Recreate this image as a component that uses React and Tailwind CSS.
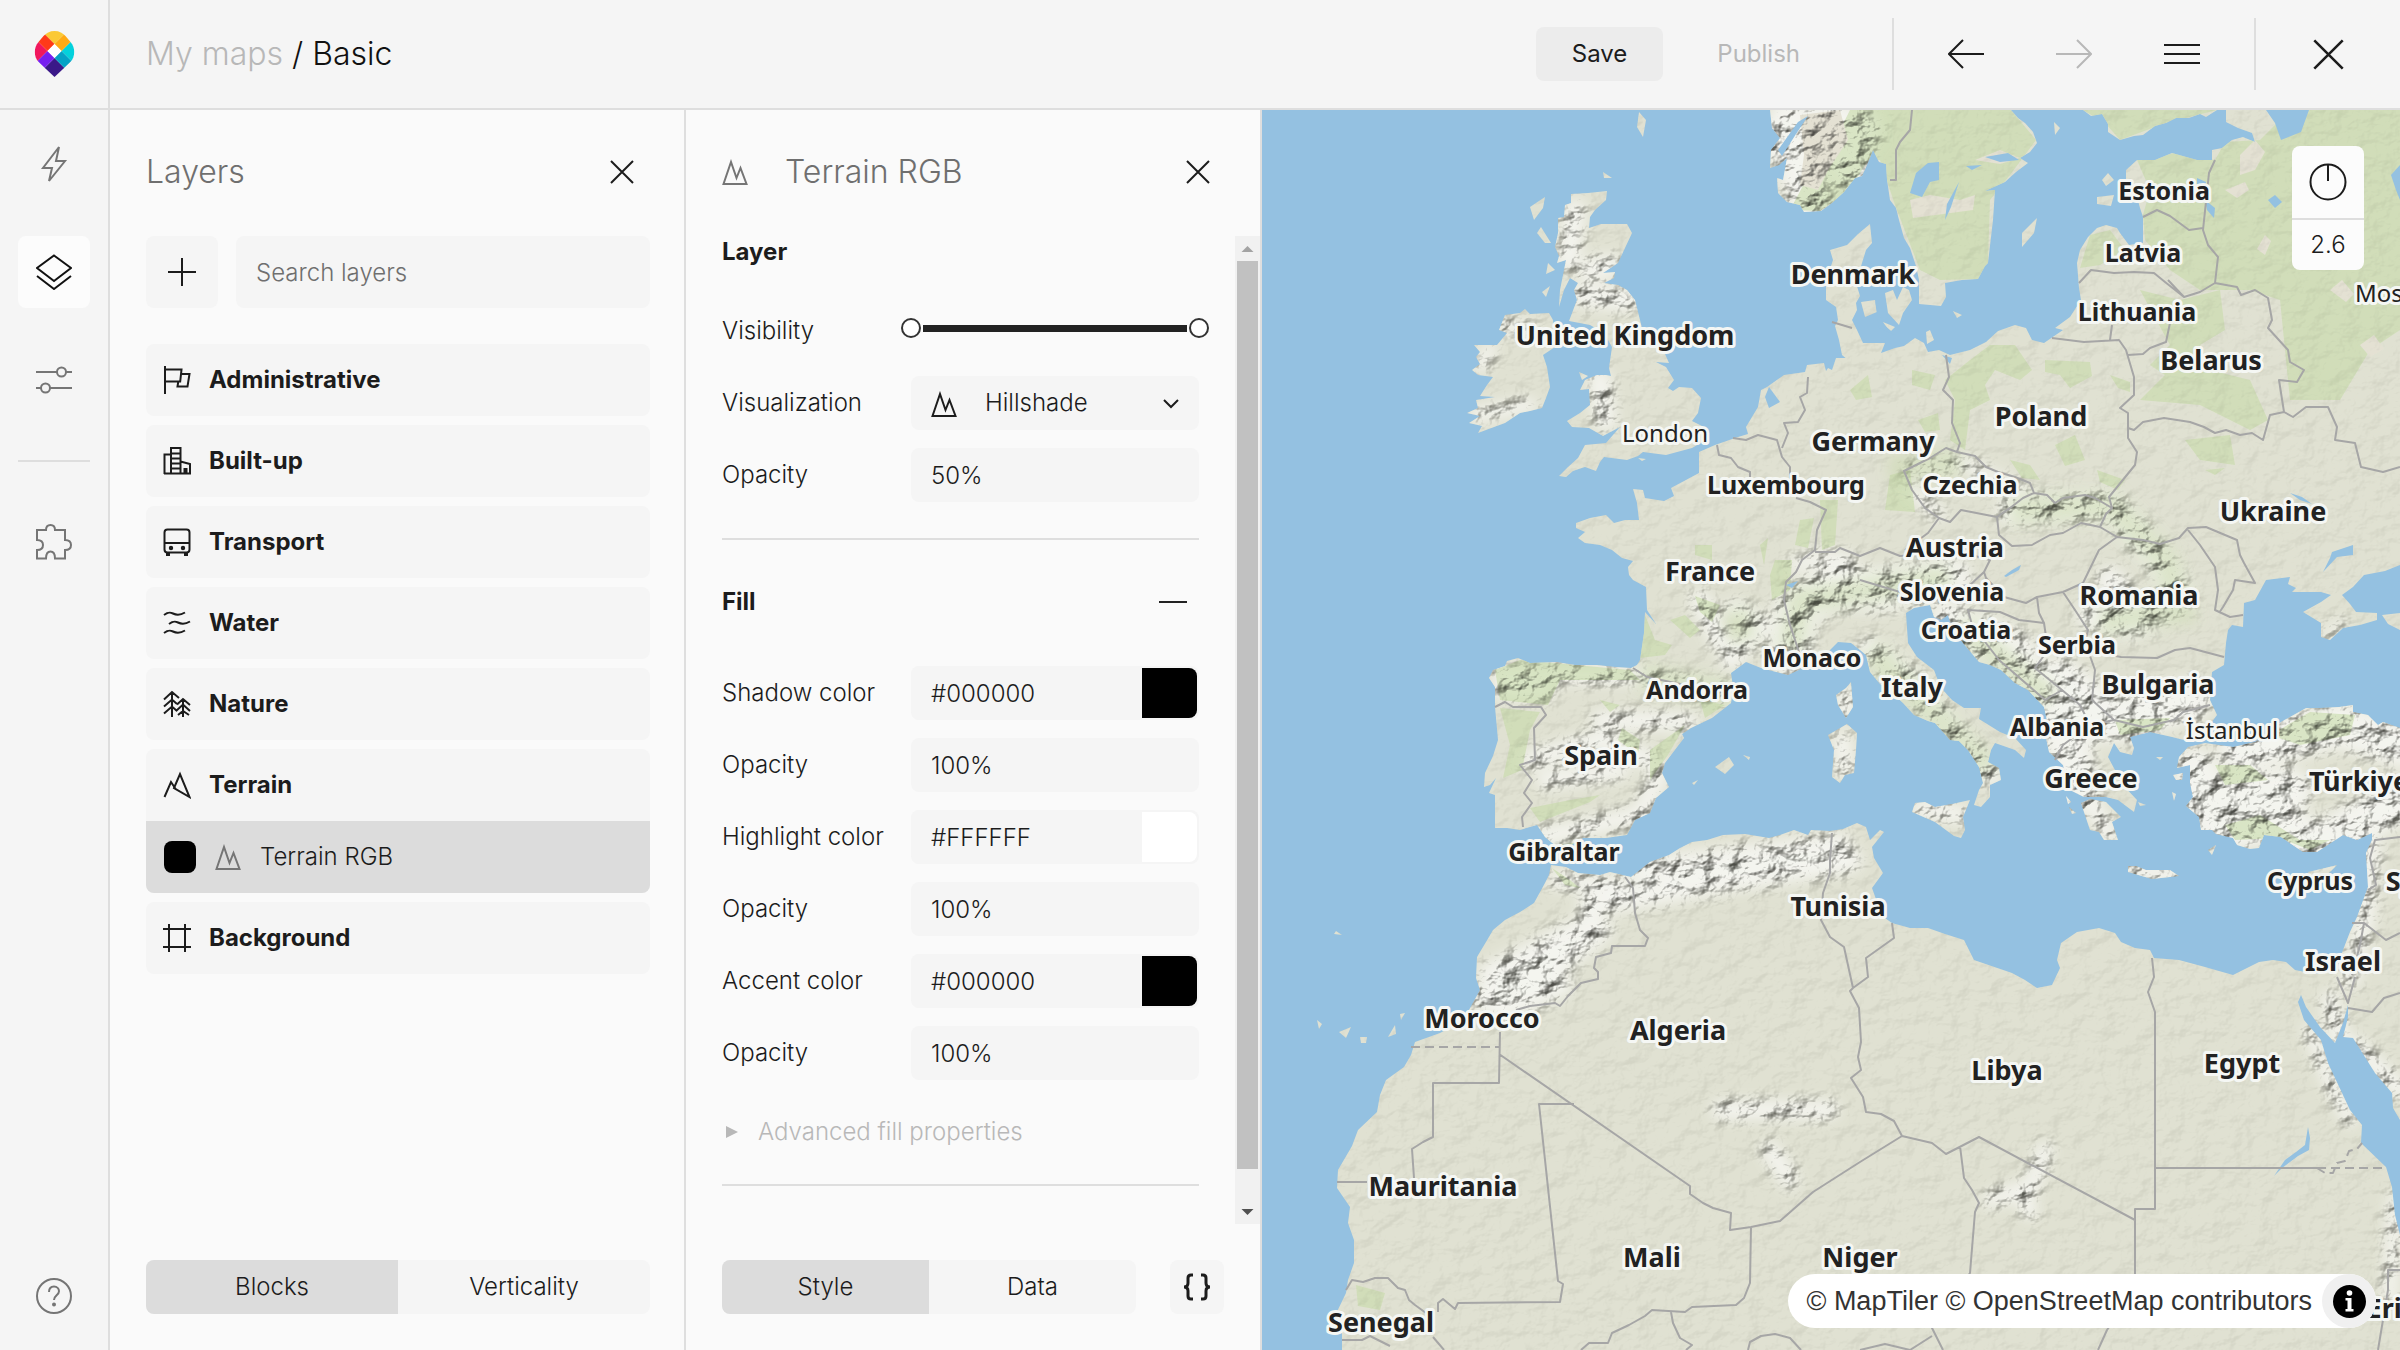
import { useState } from 'react';

const GROUPS = [
  { id: 'administrative', label: 'Administrative', icon: FlagIcon },
  { id: 'built-up', label: 'Built-up', icon: BuildingIcon },
  { id: 'transport', label: 'Transport', icon: BusIcon },
  { id: 'water', label: 'Water', icon: WavesIcon },
  { id: 'nature', label: 'Nature', icon: TreesIcon },
  { id: 'terrain', label: 'Terrain', icon: TerrainIcon, child: 'Terrain RGB' },
  { id: 'background', label: 'Background', icon: FrameIcon },
];

const FILL_FIELDS = [
  { id: 'shadow', label: 'Shadow color', value: '#000000', color: true },
  { id: 'shadow-opacity', label: 'Opacity', value: '100%' },
  { id: 'highlight', label: 'Highlight color', value: '#FFFFFF', color: true },
  { id: 'highlight-opacity', label: 'Opacity', value: '100%' },
  { id: 'accent', label: 'Accent color', value: '#000000', color: true },
  { id: 'accent-opacity', label: 'Opacity', value: '100%' },
];

/* ---------- icons ---------- */

function Icon({ size = 28, box = 28, stroke = 2, className = '', children }) {
  return (
    <svg
      width={size}
      height={size}
      viewBox={`0 0 ${box} ${box}`}
      fill="none"
      stroke="currentColor"
      strokeWidth={stroke}
      className={`shrink-0 ${className}`}
      aria-hidden="true"
    >
      {children}
    </svg>
  );
}

function FlagIcon() {
  return (
    <Icon>
      <path d="M2 0v28M2 3.5h16.500l-1.300 12H2M18 8h8.500l-2 12.500H14.500l.8-5" />
    </Icon>
  );
}

function BuildingIcon() {
  return (
    <Icon>
      <path d="M1.500 27V7.500H8M8 27V1h9.500v26M1 26.500h26V17l-9.500-2.500M8 6.500h9.500M8 11.500h9.500M8 16.500h9.500M8 21.500h9.500M21.500 27v-5h2v5" />
    </Icon>
  );
}

function BusIcon() {
  return (
    <Icon>
      <rect x="1.500" y="1.500" width="25" height="23" rx="3" />
      <path d="M1.500 15h25" />
      <path d="M3 26.500h4M21 26.500h4" strokeWidth="3" />
      <circle cx="8" cy="20" r="1.200" fill="currentColor" />
      <circle cx="20" cy="20" r="1.200" fill="currentColor" />
    </Icon>
  );
}

function WavesIcon() {
  return (
    <Icon>
      <path d="M1 6c4-3 6-3 9-1.500s7 2 12-1M6 15c4-3 6-3 9-1.500s7 2 12-1M1 24c4-3 6-3 9-1.500s7 2 12-1" />
    </Icon>
  );
}

function TreesIcon() {
  return (
    <Icon>
      <path d="M9 27V2M1 9.500L9 2l7 6M1 16.500L9 9.500l5 4.500M1 23.500L9 16.500l5 4.500M20 27V9M14 14.500L20 9l7 6M13 21l7-6.500 7 6.500M15 25l5-4 6 4" />
    </Icon>
  );
}

function TerrainIcon() {
  return (
    <Icon>
      <path d="M1.500 26L8 11l5 7.500M11 17L17 3l9.500 23z" />
    </Icon>
  );
}

function FrameIcon() {
  return (
    <Icon>
      <path d="M6 0v28M22 0v28M0 5h28M0 23h28" />
    </Icon>
  );
}

function HillshadeIcon({ className }) {
  return (
    <Icon size={26} box={26} className={className}>
      <path d="M1.500 25L9 3l5.500 16L18.500 9l6 16z" />
    </Icon>
  );
}

function CloseIcon({ size = 24 }) {
  return (
    <Icon size={size} box={24}>
      <path d="M1 1l22 22M23 1L1 23" />
    </Icon>
  );
}

function Logo() {
  return (
    <svg width="41" height="46" viewBox="0 0 40 46" aria-label="MapTiler" role="img">
      <clipPath id="pin">
        <path d="M20 0C25 0 28 2 31 5L36 11C41 17 41 25 36 31L20 46 4 31C-1 25-1 17 4 11L9 5C12 2 15 0 20 0z" />
      </clipPath>
      <g clipPath="url(#pin)">
        <path d="M20 13L6-1h28z" fill="#fbc935" />
        <path d="M13 20L-1 6v28z" fill="#f1175d" />
        <path d="M27 20L41 6v28z" fill="#03d1dc" />
        <path d="M20 27L0 47h40z" fill="#3a1888" />
        <path d="M20 13l-7 7L3 10l7-7z" fill="#ff3a18" />
        <path d="M20 13l7 7 10-10-7-7z" fill="#ffaa14" />
        <path d="M20 27l-7-7L3 30l7 7z" fill="#761ff0" />
        <path d="M20 27l7-7 10 10-7 7z" fill="#05a2c6" />
        <path d="M20 13l7 7-7 7-7-7z" fill="#fff" />
      </g>
    </svg>
  );
}

/* ---------- header and side rail ---------- */

const iconButton = 'flex h-[72px] w-[72px] shrink-0 items-center justify-center rounded-lg';

function Header() {
  return (
    <header className="flex h-[110px] shrink-0 items-center border-b-2 border-[#dedede] bg-[#f5f5f5]">
      <a
        href="#home"
        className="flex h-full w-[110px] shrink-0 items-center justify-center border-r-2 border-[#dedede]"
      >
        <Logo />
      </a>
      <nav className="ml-9 flex-1 text-[32px] font-light text-[#111]">
        <a href="#maps" className="text-[#b8b8b8]">
          My maps
        </a>{' '}
        / Basic
      </nav>
      <div className="flex items-center gap-[18px]">
        <button type="button" className="h-[54px] rounded-lg bg-[#ececec] px-9 text-2xl">
          Save
        </button>
        <button type="button" className="h-[54px] px-9 text-2xl text-[#b8b8b8]">
          Publish
        </button>
      </div>
      <div className="ml-14 flex items-center gap-9 pr-9">
        <span className="h-[72px] w-0.5 bg-[#dedede]" />
        <button type="button" aria-label="Undo" className={iconButton}>
          <Icon size={36} box={36}>
            <path d="M36 18H1M15 4L1 18l14 14" />
          </Icon>
        </button>
        <button type="button" aria-label="Redo" className={`${iconButton} text-[#b8b8b8]`}>
          <Icon size={36} box={36}>
            <path d="M0 18h35M21 4l14 14-14 14" />
          </Icon>
        </button>
        <button type="button" aria-label="Menu" className={iconButton}>
          <Icon size={36} box={36}>
            <path d="M0 9h36M0 18h36M0 27h36" />
          </Icon>
        </button>
        <span className="h-[72px] w-0.5 bg-[#dedede]" />
        <button type="button" aria-label="Close editor" className={iconButton}>
          <CloseIcon size={31} />
        </button>
      </div>
    </header>
  );
}

function SideRail() {
  return (
    <aside className="flex w-[110px] shrink-0 flex-col items-center border-r-2 border-[#dedede] bg-[#f5f5f5] pt-[18px] pb-[18px] text-[#757575]">
      <div className="flex flex-col items-center gap-9">
        <button type="button" aria-label="Quick style" className={iconButton}>
          <Icon size={36} box={36}>
            <path d="M23 1L7 22h9l-3 13L29 15h-9z" />
          </Icon>
        </button>
        <button type="button" aria-label="Layers" className={`${iconButton} bg-[#fcfcfc] text-[#111]`}>
          <Icon size={36} box={36}>
            <path d="M18 1.500L35 14 18 27 1 14zM1 22l17 13 17-13" />
          </Icon>
        </button>
        <button type="button" aria-label="Settings" className={iconButton}>
          <Icon size={36} box={36}>
            <path d="M0 10h21M30 10h6M0 26h5M14 26h22" />
            <circle cx="25.500" cy="10" r="4.500" />
            <circle cx="9.500" cy="26" r="4.500" />
          </Icon>
        </button>
        <span className="my-2 h-0.5 w-[72px] bg-[#dedede]" />
        <button type="button" aria-label="Plugins" className={iconButton}>
          <Icon size={36} box={36}>
            <path d="M1 6h9c0-3 1-5 4.500-5S19 3 19 6h10v10c4 0 6 2 6 5s-2 5-6 5v8.500H19c0-4-1-7-4.500-7s-4.500 3-4.500 7H1V26c4 0 6-2 6-5s-2-5-6-5z" />
          </Icon>
        </button>
      </div>
      <button type="button" aria-label="Help" className={`${iconButton} mt-auto`}>
        <Icon size={36} box={36}>
          <circle cx="18" cy="18" r="17" />
          <path d="M13 14c0-3.500 2-5.500 5-5.500s5 2 5 4.800c0 4-5 4.200-5 8.700" />
          <circle cx="18" cy="26.500" r="1" fill="currentColor" />
        </Icon>
      </button>
    </aside>
  );
}

/* ---------- panels ---------- */

const segment = 'h-[54px] flex-1 text-2xl font-light';

function LayersPanel() {
  const [mode, setMode] = useState('Blocks');
  return (
    <section className="flex w-[576px] shrink-0 flex-col border-r-2 border-[#dedede] bg-[#fafafa] pt-[26px] pr-[34px] pb-9 pl-9">
      <div className="flex h-[72px] items-center justify-between">
        <h2 className="text-[32px] font-light text-[#6f6f6f]">Layers</h2>
        <button type="button" aria-label="Close layers" className="p-4">
          <CloseIcon />
        </button>
      </div>
      <div className="mt-7 flex gap-[18px]">
        <button type="button" aria-label="Add layer" className={`${iconButton} bg-[#f5f5f5]`}>
          <Icon>
            <path d="M14 0v28M0 14h28" />
          </Icon>
        </button>
        <input
          type="search"
          aria-label="Search layers"
          placeholder="Search layers"
          className="h-[72px] min-w-0 flex-1 rounded-lg bg-[#f5f5f5] px-5 text-2xl font-light placeholder:text-[#6f6f6f]"
        />
      </div>
      <ul className="mt-9 flex flex-col gap-[9px]">
        {GROUPS.map(({ id, label, icon: GroupIcon, child }) => (
          <li key={id} className="overflow-hidden rounded-lg bg-[#f5f5f5]">
            <button type="button" className="flex h-[72px] w-full items-center gap-[18px] pl-[17px] text-2xl font-bold">
              <GroupIcon />
              {label}
            </button>
            {child && (
              <button
                type="button"
                className="flex h-[72px] w-full items-center gap-[19px] bg-[#dcdcdc] pl-[18px] text-2xl font-light"
              >
                <span className="h-8 w-8 rounded-lg bg-black" />
                <HillshadeIcon className="text-[#757575]" />
                {child}
              </button>
            )}
          </li>
        ))}
      </ul>
      <div className="mt-auto flex overflow-hidden rounded-lg bg-[#f5f5f5]">
        {['Blocks', 'Verticality'].map((name) => (
          <button
            key={name}
            type="button"
            onClick={() => setMode(name)}
            className={`${segment} ${mode === name ? 'bg-[#dcdcdc]' : ''}`}
          >
            {name}
          </button>
        ))}
      </div>
    </section>
  );
}

function Row({ id, label, children }) {
  return (
    <div className="grid h-[54px] grid-cols-[189px_1fr] items-center">
      <label htmlFor={id} className="text-2xl font-light whitespace-nowrap">
        {label}
      </label>
      {children}
    </div>
  );
}

const field = 'h-[54px] w-full min-w-0 rounded-lg bg-[#f5f5f5] px-5 text-2xl font-light';

const thumb =
  'pointer-events-none absolute inset-x-0 h-6 appearance-none bg-transparent [&::-webkit-slider-thumb]:pointer-events-auto [&::-webkit-slider-thumb]:h-5 [&::-webkit-slider-thumb]:w-5 [&::-webkit-slider-thumb]:appearance-none [&::-webkit-slider-thumb]:rounded-full [&::-webkit-slider-thumb]:border-2 [&::-webkit-slider-thumb]:border-[#333] [&::-webkit-slider-thumb]:bg-white';

function VisibilitySlider() {
  return (
    <div className="relative -mx-2.5 mb-1.5 flex h-6 items-center">
      <span className="mx-[22px] h-[7px] flex-1 bg-[#222]" />
      <input id="visibility" type="range" min="0" max="22" defaultValue="0" className={thumb} />
      <input type="range" aria-label="Maximum zoom" min="0" max="22" defaultValue="22" className={thumb} />
    </div>
  );
}

function ColorField({ id, value, label }) {
  return (
    <div className="flex h-[54px] items-center rounded-lg bg-[#f5f5f5] pr-0.5">
      <input id={id} type="text" defaultValue={value} className={field} />
      <input
        type="color"
        aria-label={`${label} picker`}
        defaultValue={value.toLowerCase()}
        className="h-[50px] w-[55px] shrink-0 appearance-none overflow-hidden rounded-r-lg [&::-webkit-color-swatch]:border-none [&::-webkit-color-swatch-wrapper]:p-0"
      />
    </div>
  );
}

function StylePanel() {
  const [tab, setTab] = useState('Style');
  return (
    <section className="flex w-[576px] shrink-0 flex-col border-r-2 border-[#dedede] bg-[#fafafa] pt-[26px] pb-9">
      <div className="flex h-[72px] shrink-0 items-center pr-[34px] pl-9">
        <HillshadeIcon className="text-[#757575]" />
        <h2 className="ml-[37px] flex-1 text-[32px] font-light text-[#6f6f6f]">Terrain RGB</h2>
        <button type="button" aria-label="Close layer" className="p-4">
          <CloseIcon />
        </button>
      </div>
      <div className="mt-7 flex min-h-0 flex-1">
        <div className="flex-1 overflow-hidden px-9">
          <h3 className="flex h-8 items-center text-2xl font-bold">Layer</h3>
          <div className="mt-9 flex flex-col gap-[18px]">
            <Row id="visibility" label="Visibility">
              <VisibilitySlider />
            </Row>
            <Row id="visualization" label="Visualization">
              <div className="relative">
                <select id="visualization" className={`${field} appearance-none pl-[74px]`}>
                  <option>Hillshade</option>
                </select>
                <HillshadeIcon className="pointer-events-none absolute top-[15px] left-5" />
                <Icon size={16} box={16} className="pointer-events-none absolute top-5 right-5">
                  <path d="M1 4l7 7 7-7" />
                </Icon>
              </div>
            </Row>
            <Row id="opacity" label="Opacity">
              <input id="opacity" type="text" defaultValue="50%" className={field} />
            </Row>
          </div>
          <hr className="mt-9 border-t-2 border-[#dedede]" />
          <div className="mt-[46px] flex h-8 items-center justify-between">
            <h3 className="text-2xl font-bold">Fill</h3>
            <button type="button" aria-label="Collapse fill" className="px-3 py-2">
              <span className="block h-0.5 w-[28px] bg-[#222]" />
            </button>
          </div>
          <div className="mt-12 flex flex-col gap-[18px]">
            {FILL_FIELDS.map(({ id, label, value, color }) => (
              <Row key={id} id={id} label={label}>
                {color ? (
                  <ColorField id={id} value={value} label={label} />
                ) : (
                  <input id={id} type="text" defaultValue={value} className={field} />
                )}
              </Row>
            ))}
          </div>
          <button type="button" className="mt-9 flex h-8 items-center text-2xl font-light text-[#b8b8b8]">
            <svg width="36" height="14" viewBox="0 0 36 14" aria-hidden="true">
              <path d="M4 1l12 6-12 6z" fill="#b8b8b8" />
            </svg>
            Advanced fill properties
          </button>
          <hr className="mt-9 border-t-2 border-[#dedede]" />
        </div>
        <div className="flex w-[25px] shrink-0 flex-col items-center bg-[#f1f1f1]" aria-hidden="true">
          <svg width="25" height="25" viewBox="0 0 25 25">
            <path d="M6.500 16l6-6 6 6z" fill="#a3a3a3" />
          </svg>
          <div className="w-[21px] flex-1 bg-[#c1c1c1]" />
          <svg width="25" height="55" viewBox="0 0 25 55">
            <path d="M6.500 40h12l-6 6z" fill="#505050" />
          </svg>
        </div>
      </div>
      <div className="mt-9 flex justify-between pr-9 pl-9">
        <div className="flex w-[414px] overflow-hidden rounded-lg bg-[#f5f5f5]">
          {['Style', 'Data'].map((name) => (
            <button
              key={name}
              type="button"
              onClick={() => setTab(name)}
              className={`${segment} ${tab === name ? 'bg-[#dcdcdc]' : ''}`}
            >
              {name}
            </button>
          ))}
        </div>
        <button type="button" aria-label="Edit JSON" className="flex h-[54px] w-[54px] items-center justify-center rounded-lg bg-[#f5f5f5]">
          <Icon size={28} box={28} stroke={3}>
            <path d="M10 2H8Q5 2 5 5v5q0 4-4 4 4 0 4 4v5q0 3 3 3h2M18 2h2q3 0 3 3v5q0 4 4 4-4 0-4 4v5q0 3-3 3h-2" />
          </Icon>
        </button>
      </div>
    </section>
  );
}

/* ---------- map ---------- */

const LAND = [
  // Scandinavia
  '1770,110 1772,128 1780,138 1771,150 1770,168 1779,165 1787,158 1783,180 1777,178 1778,193 1787,202 1800,205 1804,212 1821,211 1832,203 1844,192 1855,178 1862,176 1867,165 1873,150 1879,162 1886,164 1887,180 1890,200 1896,208 1899,220 1904,238 1910,248 1916,266 1919,280 1919,304 1941,306 1946,297 1945,283 1962,280 1978,279 1985,266 1988,263 1993,220 1995,190 1985,191 2005,182 2016,172 2028,163 2020,158 2030,152 2037,143 2033,132 2025,123 2018,118 2011,110',
  // Finland
  '2083,110 2091,116 2102,114 2108,124 2108,132 2120,140 2134,136 2143,135 2155,126 2166,123 2176,118 2189,118 2200,114 2206,117 2217,110',
  // continental Europe
  '2226,110 2226,122 2238,128 2252,133 2255,142 2243,137 2232,140 2222,148 2212,150 2212,160 2197,160 2172,153 2155,160 2137,160 2126,170 2126,187 2137,197 2140,208 2143,217 2143,243 2129,245 2120,233 2117,228 2106,225 2097,228 2088,237 2080,250 2077,263 2079,288 2081,300 2070,317 2055,328 2063,330 2044,343 2032,340 2026,328 2015,325 1998,331 1986,342 1970,350 1950,355 1939,350 1928,352 1924,343 1915,338 1904,346 1895,348 1881,353 1885,343 1863,343 1857,330 1852,320 1857,310 1856,303 1860,296 1856,283 1862,263 1866,250 1872,243 1870,224 1858,234 1847,245 1830,250 1833,260 1829,272 1826,283 1826,300 1836,307 1838,320 1835,326 1839,340 1842,355 1855,366 1847,358 1836,358 1832,370 1828,368 1826,371 1824,363 1807,365 1805,372 1784,375 1767,387 1761,390 1758,407 1746,427 1748,434 1738,437 1715,445 1699,452 1699,473 1671,488 1674,496 1664,501 1645,498 1643,490 1633,489 1637,503 1639,520 1625,520 1614,523 1606,515 1590,518 1576,523 1576,528 1585,532 1578,538 1585,543 1600,545 1612,550 1622,558 1633,561 1628,567 1629,575 1633,580 1646,587 1647,610 1656,624 1645,612 1644,633 1640,660 1637,665 1631,668 1615,667 1597,665 1575,665 1557,662 1530,663 1518,658 1507,661 1505,666 1493,670 1489,678 1495,687 1495,707 1498,740 1493,756 1485,773 1484,787 1490,785 1496,778 1489,793 1495,795 1495,828 1507,828 1520,830 1537,825 1545,837 1557,847 1566,848 1583,838 1606,838 1627,835 1635,820 1650,813 1656,798 1669,787 1662,773 1665,763 1684,738 1682,734 1691,728 1712,718 1731,703 1733,687 1731,673 1746,662 1761,668 1788,675 1803,668 1823,657 1838,642 1851,643 1860,650 1866,655 1870,672 1880,684 1892,693 1903,703 1914,715 1928,721 1935,723 1950,740 1959,741 1968,750 1979,767 1983,783 1979,790 1974,805 1981,807 1990,797 1990,785 2001,780 1999,768 1988,762 1991,750 1995,743 2015,750 2024,758 2026,750 2015,738 2000,732 1979,719 1981,708 1964,708 1952,700 1943,690 1937,678 1934,670 1917,657 1908,643 1906,613 1914,608 1930,605 1934,617 1941,620 1948,615 1952,628 1963,643 1979,662 1990,665 2001,670 2015,683 2028,690 2044,707 2048,725 2046,738 2049,752 2063,765 2070,790 2084,797 2106,797 2118,800 2134,812 2137,800 2121,783 2115,770 2108,757 2114,743 2120,752 2132,755 2134,748 2130,737 2150,732 2172,737 2184,740 2200,738 2217,715 2210,700 2212,672 2224,665 2226,643 2228,630 2232,625 2243,627 2244,603 2255,600 2266,580 2282,578 2290,577 2288,584 2296,588 2292,592 2321,592 2331,595 2321,602 2303,612 2321,623 2321,637 2330,640 2343,628 2360,625 2377,620 2377,613 2356,612 2350,604 2342,595 2353,587 2364,575 2385,571 2400,565 2400,110',
  // Peloponnese
  '2081,803 2090,799 2106,802 2121,817 2112,822 2118,840 2104,840 2099,832 2090,830',
  // Africa and Asia
  '2400,728 2383,722 2378,725 2368,715 2353,712 2353,705 2339,707 2320,708 2306,708 2281,722 2268,732 2255,742 2233,747 2205,743 2188,747 2179,757 2177,768 2190,765 2190,783 2193,797 2186,806 2199,817 2201,830 2212,830 2216,834 2233,838 2237,845 2250,849 2259,848 2264,835 2281,837 2303,852 2317,852 2343,835 2357,840 2372,833 2372,840 2366,853 2368,887 2357,917 2350,932 2343,950 2337,968 2316,974 2295,970 2286,962 2273,960 2259,962 2233,975 2205,967 2179,960 2154,958 2150,950 2135,948 2121,942 2115,933 2099,928 2077,932 2061,943 2057,960 2060,968 2052,985 2037,988 2025,980 2012,973 1974,960 1969,950 1964,940 1945,934 1928,928 1910,928 1892,923 1882,916 1872,888 1883,873 1874,858 1872,847 1884,832 1880,830 1870,840 1866,827 1857,823 1843,829 1830,831 1811,830 1808,835 1794,830 1780,835 1769,838 1745,834 1723,835 1707,840 1692,842 1680,848 1669,855 1650,862 1631,877 1610,872 1600,875 1578,873 1566,867 1551,865 1549,875 1545,883 1534,903 1520,912 1505,920 1493,930 1486,942 1477,957 1476,978 1480,990 1469,1010 1455,1025 1440,1033 1415,1042 1411,1055 1404,1067 1386,1080 1380,1095 1377,1112 1358,1130 1352,1146 1338,1170 1337,1188 1350,1207 1348,1223 1354,1240 1354,1263 1348,1280 1346,1293 1333,1320 1342,1333 1342,1350 2400,1350',
  // Great Britain
  '1571,194 1588,193 1607,191 1606,200 1595,210 1590,217 1589,228 1601,224 1627,224 1632,233 1618,263 1603,273 1615,272 1614,278 1604,283 1618,285 1627,290 1635,300 1640,320 1643,333 1662,347 1669,363 1656,362 1666,367 1674,380 1668,388 1673,391 1679,387 1692,388 1701,398 1698,413 1692,421 1706,428 1706,440 1692,448 1666,455 1643,452 1638,456 1627,460 1604,457 1600,462 1596,471 1585,467 1573,471 1566,477 1559,476 1568,467 1578,458 1585,445 1606,443 1620,427 1603,436 1589,428 1572,427 1567,421 1580,413 1590,405 1589,389 1580,390 1585,380 1597,375 1606,375 1611,376 1609,368 1612,347 1604,333 1590,325 1569,321 1577,300 1574,290 1578,283 1570,278 1564,290 1559,307 1560,290 1562,280 1566,260 1557,263 1559,256 1555,247 1558,233 1558,218 1564,217 1565,205 1571,203',
  // Ireland
  '1505,315 1520,313 1525,309 1530,314 1549,313 1553,320 1555,347 1543,355 1547,367 1550,387 1546,398 1542,408 1530,411 1520,413 1505,423 1478,433 1482,426 1469,423 1480,416 1467,413 1478,408 1476,400 1495,397 1480,396 1487,385 1493,377 1478,375 1472,370 1480,364 1476,357 1480,352 1474,345 1497,345 1507,333 1499,330',
  // smaller islands
  '1639,112 1646,120 1643,137 1637,127',
  '1603,172 1612,178 1604,178',
  '1545,197 1543,208 1534,220 1530,207',
  '1541,227 1551,243 1545,243 1537,233',
  '1548,263 1555,270 1546,274',
  '1550,286 1546,297 1542,292',
  '1579,372 1588,376 1582,380',
  '1638,458 1646,459 1642,461',
  '1861,302 1875,300 1877,312 1865,317',
  '1885,293 1893,290 1897,300 1903,287 1909,290 1912,300 1903,313 1899,325 1888,313',
  '1883,322 1895,327 1890,332',
  '1953,311 1962,315 1957,318',
  '1926,332 1930,330 1934,340 1927,344',
  '2037,218 2034,233 2022,247 2022,233',
  '1999,237 1993,255 1988,270',
  '2097,197 2114,195 2111,206 2097,204',
  '2108,173 2114,180 2106,186 2102,180',
  '2054,122 2060,128 2055,135',
  '1851,682 1853,707 1846,718 1838,705 1836,695 1846,688',
  '1847,724 1857,733 1856,750 1854,773 1845,775 1840,783 1832,777 1834,750 1828,735',
  '1915,803 1925,802 1935,807 1952,804 1970,800 1963,817 1965,830 1961,838 1954,836 1935,822 1912,812',
  '2128,866 2136,866 2146,870 2170,870 2179,876 2152,879 2128,872',
  '1715,767 1729,757 1734,765 1725,774',
  '1743,755 1750,757 1749,760',
  '1692,783 1698,780 1694,785',
  '2308,872 2325,868 2337,865 2328,874 2312,882',
  '2173,775 2183,773 2182,780 2176,780',
  '2172,792 2176,794 2174,801',
  '2208,850 2216,845 2212,855',
  '2066,796 2071,802 2068,804',
  '2069,807 2076,813 2072,814',
  '2138,802 2146,805 2140,806',
  '2156,757 2163,757 2160,760',
  '2382,615 2400,613 2400,630 2388,624',
  '1336,931 1342,935 1334,934',
  '1317,1020 1322,1024 1319,1029',
  '1339,1032 1351,1027 1346,1038',
  '1360,1037 1367,1037 1366,1043 1361,1043',
  '1395,1025 1396,1034 1388,1037',
  '1400,1014 1405,1013 1401,1020',
];

const WATER = [
  // Red Sea
  '2301,995 2306,1007 2320,1027 2335,1043 2343,1023 2348,1005 2348,1017 2343,1037 2353,1038 2375,1073 2392,1093 2393,1108 2400,1120 2400,1235 2395,1215 2392,1187 2386,1167 2361,1143 2362,1125 2350,1110 2328,1063 2321,1040 2304,1020 2298,1002',
  '1928,163 1939,162 1939,180 1930,182 1922,197 1910,193 1916,173',
  '1959,182 1951,207 1945,220 1947,204',
  '1985,157 2008,153 2019,160 2000,162',
  '1966,166 1982,165 1972,170',
  '2266,110 2309,110 2301,132 2281,140 2275,123',
  '2275,195 2282,202 2275,208 2268,200',
  '2197,178 2206,182 2205,190 2197,186',
  '2205,200 2215,208 2214,218 2207,210',
  '1769,387 1780,402 1769,408 1765,397',
  '1942,355 1952,358 1950,364',
  '2332,552 2353,545 2353,555 2337,557 2323,572 2330,558',
  '2290,493 2302,497 2312,504 2300,500',
  '2004,576 2012,570 2021,565 2019,570 2006,577',
  '2391,175 2400,165 2400,200 2396,190',
  '2308,1127 2310,1138 2309,1150 2298,1156 2282,1168 2274,1176 2285,1160 2296,1152 2305,1145',
  '1786,585 1798,581 1792,588',
];

const FOREST = [
  '1790,210 1806,180 1830,150 1850,110 2011,110 2036,140 2010,175 1990,200 1988,263 1978,279 1940,280 1920,270 1895,205 1880,160 1868,160 1850,190 1820,211',
  '2083,110 2217,110 2166,123 2120,140 2106,124',
  '2137,160 2175,153 2215,160 2225,142 2260,140 2290,110 2400,110 2400,330 2370,350 2340,400 2290,400 2280,300 2250,290 2200,290 2170,270 2145,240 2143,215 2150,190',
  '2090,235 2110,230 2125,250 2100,265 2080,268',
  '2140,290 2180,300 2220,290 2225,330 2200,345 2210,370 2250,380 2268,420 2250,430 2200,405 2140,400 2165,375 2150,365 2170,345',
  '1945,380 1970,360 1990,345 2015,345 2032,370 2020,380 1995,370 1985,385 1990,400 1970,410 1965,450 1950,440 1955,400',
  '2045,360 2090,362 2092,376 2070,388 2060,375 2045,372',
  '1850,390 1868,375 1872,397 1856,400',
  '1912,370 1935,375 1930,390 1912,385',
  '1918,420 1938,413 1940,430 1925,432',
  '2010,460 2030,465 2040,480 2022,478',
  '2055,445 2075,435 2085,460 2065,466',
  '2097,470 2125,480 2118,490 2100,482',
  '2110,375 2130,382 2130,392 2118,388',
  '2185,440 2230,435 2235,465 2200,460',
  '2205,470 2225,468 2215,475',
  '1890,475 1910,470 1915,512 1885,510',
  '1820,500 1838,500 1835,545 1822,550',
  '1800,520 1814,518 1808,548 1795,545',
  '1775,560 1792,560 1790,590 1772,600 1770,575',
  '1645,615 1655,640 1672,645 1665,655 1640,658',
  '1670,620 1685,615 1700,630 1690,638',
  '1695,545 1712,545 1712,560 1695,555',
  '1760,545 1768,538 1764,565',
  '1695,596 1720,605 1712,622 1700,612',
  '1495,670 1520,660 1630,670 1640,680 1560,680 1548,705 1500,700',
  '1500,708 1540,712 1530,730 1522,770 1503,778 1510,745',
  '1530,808 1570,800 1600,795 1590,802 1540,822',
  '1622,728 1640,740 1638,755 1618,740',
  '1650,750 1685,725 1668,755 1650,780',
  '1600,700 1620,705 1610,712',
  '1700,700 1725,705 1705,718',
  '1555,845 1600,840 1560,852',
  '1552,868 1570,880 1580,888 1565,885',
  '1356,1285 1385,1293 1380,1310 1358,1306',
  '2115,720 2170,718 2160,730 2120,735',
  '2215,765 2250,765 2268,780 2225,785',
  '2270,735 2310,712 2355,715 2350,735 2300,745',
  '2225,825 2260,815 2300,840 2330,840 2310,850 2280,838 2235,840',
];

// mountain ranges: path and width
const RANGES = [
  ['M1790 655L1795 610 1830 588 1880 590 1950 578', 42],
  ['M1795 565L1818 558 1850 560', 14],
  ['M1640 676L1735 696', 16],
  ['M1500 674L1630 676M1500 690L1545 692', 16],
  ['M1530 760L1600 740 1650 760M1545 780L1620 770M1540 838L1640 815 1660 775M1600 720L1690 722', 18],
  ['M1735 610L1760 625 1730 660M1700 600L1720 640', 20],
  ['M1482 1000L1560 962 1600 930M1490 975L1590 925M1500 1010L1560 985M1590 905L1700 885 1850 860M1640 870L1840 845', 24],
  ['M1555 880L1620 885', 16],
  ['M2010 510L2110 505 2160 560 2180 600 2130 625 2090 615M2110 580L2125 600', 26],
  ['M1950 625L2010 650 2060 720 2080 790M2060 680L2110 720 2190 700M2090 720L2140 720', 44],
  ['M1870 650L1910 680 1950 730 1990 775', 24],
  ['M2195 770L2220 830 2270 820 2320 845 2400 800M2240 750L2340 725 2400 745M2200 800L2290 790', 44],
  ['M2372 850L2365 920 2350 980M2330 1000L2340 1040M2355 1045L2400 1090', 18],
  ['M1790 120L1800 170 1810 200M1830 120L1850 170M1780 140L1860 130', 44],
  ['M1575 210L1568 260M1590 270L1610 265M1580 295L1630 300M1600 380L1605 420', 22],
  ['M1500 325L1530 330M1475 415L1530 405M1480 365L1490 350', 14],
  ['M1910 470L1960 462 2020 490M1912 490L1940 515', 12],
  ['M1990 1200L2020 1190 2030 1212M2045 1150L2030 1190', 16],
  ['M1720 1110L1830 1110M1770 1150L1790 1180', 18],
  ['M2310 1030L2330 1080 2350 1120M2395 1200L2390 1300', 14],
  ['M2095 810L2110 835M1920 808L1960 815M1842 740L1845 770M1845 695L1846 712M2130 870L2175 875', 18],
  ['M2325 635L2343 622', 8],
];

const BORDERS =
  'M1500 1032L1499 1083H1433V1137L1423 1142 1412 1149 1414 1178M1337 1182h30M1499 1054L1690 1186V1194L1703 1203 1713 1208 1731 1213 1730 1230 1751 1227 1780 1221 1813 1192 1860 1162 1902 1136M1574 1104H1539L1558 1281 1563 1284 1560 1302 1458 1303 1455 1309 1443 1299 1438 1303V1312M1346 1290L1352 1280 1363 1282 1375 1278 1388 1278 1398 1288 1405 1290 1409 1300 1415 1305 1426 1313M1433 1337L1444 1350M1342 1340h20l8-4 20 10M1751 1227L1750 1283 1744 1298 1736 1305 1692 1307 1685 1312 1652 1310 1645 1316 1629 1325 1612 1333 1608 1343 1589 1343 1581 1350M1671 1312L1673 1323 1680 1338 1692 1345 1686 1350M1748 1350L1750 1342 1761 1336 1775 1334 1790 1338 1801 1350' +
  'M1625 877L1633 888 1635 913 1640 930 1648 938 1645 946H1612L1611 953 1596 957 1594 968 1598 972V979L1581 983 1568 996 1560 1006 1555 1003 1530 1006 1516 1010M1832 833L1830 860 1830 873 1823 893 1821 920 1830 937 1844 947 1853 988 1868 977 1866 958 1880 948 1894 938 1892 923M1853 988L1850 991 1859 1008 1861 1042 1858 1057 1861 1070 1851 1078 1863 1097 1866 1112 1881 1114 1894 1121 1902 1136 1932 1143 1946 1154 1979 1137 2135 1220M1960 1146L1964 1178 1972 1190 1979 1203 1975 1212 1970 1273 1932 1328 1943 1350M1860 1350L1885 1344 1910 1350 1932 1336M2152 958L2154 977 2148 992 2155 1012V1209H2135V1290L2107 1330 2098 1350M2155 1168H2317M2337 977L2348 1003 2355 977M2348 1008L2372 1012 2384 998 2400 993M2400 1270H2388V1290L2378 1350' +
  'M1495 707L1505 702 1513 707 1541 707 1546 715 1534 728 1535 760 1520 765 1532 780 1524 793 1532 803 1522 817 1523 827M1633 668L1647 677 1680 684 1731 690M1717 445L1719 455 1731 458 1738 467 1750 472V490M1796 498L1810 502 1826 510 1817 530 1815 550 1802 560 1796 572 1786 582 1784 600 1790 625 1800 655M1815 552L1835 552 1840 548 1860 556M1733 438L1746 440 1758 435 1777 440 1782 457 1790 467V490M1808 377L1807 393 1800 397 1805 410 1798 422 1784 423 1788 433 1782 448M1832 322L1852 328M1946 355L1949 377 1943 390 1953 400 1952 423 1960 443 1957 452M1957 452L1946 448 1930 458 1904 471 1912 490 1925 508 1939 518 1950 522 1961 510 1997 517 2010 508 2023 498 2034 493 2030 483 2015 477 1998 472 1986 467 1975 456zM2034 493L2047 495 2055 503 2063 498 2085 495 2095 498 2112 508 2106 514 2100 527 2081 523 2063 533 2050 535 2032 545 2012 546 1999 535 1997 517M1939 518L1928 533 1905 550M1860 556L1880 548 1900 556 1960 552 1990 560 1984 572 1986 578 2004 597 2026 603 2037 597 2063 592 2083 583 2099 550 2117 537 2100 527M1984 572L1970 585 1900 592 1860 580' +
  'M2052 338L2084 342 2119 340 2126 350 2134 377V395L2120 408 2128 413V438L2137 452 2135 465 2109 497 2112 508M2110 340L2112 325M2128 355L2143 354 2150 348 2166 342 2170 323M2184 297L2168 280M2079 283L2091 270 2114 273 2134 272 2154 273 2165 282 2184 297 2200 292 2215 283 2218 257 2208 245 2203 230 2209 173 2215 160M2143 217L2157 210 2170 216 2189 230 2203 228M2215 283L2237 287 2241 295 2255 290 2268 298 2272 320 2268 328 2288 350 2290 362 2304 370 2297 382 2279 380 2284 412 2293 417 2306 407 2328 407 2337 427 2335 440 2355 443 2361 467 2383 472 2400 467M2128 428L2134 430 2143 422 2164 418 2190 422 2204 427 2215 433 2226 430 2240 435 2252 433 2263 440 2270 415 2284 412M2117 537L2143 540 2160 544 2179 538 2188 528 2206 527 2225 535 2237 540 2240 555 2244 563 2255 583 2235 580 2233 590 2223 607 2219 613M2188 530L2200 545 2215 567 2218 590 2215 610 2230 617 2243 615M2063 592L2075 610 2088 630 2085 642 2110 655 2121 657 2157 658 2175 650 2190 648 2224 657M2037 597L2039 613 2044 623 2019 620 2000 612 1968 610 1972 625 1999 660 2045 700 2062 690 2080 705 2090 725 2063 745 2055 760M2044 623L2048 650 2035 668 2062 690M2090 725L2114 720 2143 727 2174 720 2183 712 2210 705M2085 642L2095 670 2092 700 2114 720M2400 837L2375 840 2370 858 2376 885 2368 890M2352 923H2364L2386 940 2400 933M2364 923L2360 945 2352 975M1912 110L1910 130 1900 142 1896 150V180L1890 180';

const LABELS = [
  ['Estonia', 2164, 200, 'md'],
  ['Latvia', 2143, 262, 'md'],
  ['Denmark', 1853, 284, 'lg'],
  ['Lithuania', 2137, 321, 'md'],
  ['Belarus', 2211, 370, 'lg'],
  ['Poland', 2041, 426, 'lg'],
  ['Germany', 1873, 451, 'lg'],
  ['Czechia', 1970, 494, 'md'],
  ['Luxembourg', 1786, 494, 'md'],
  ['Ukraine', 2273, 521, 'lg'],
  ['Austria', 1955, 557, 'lg'],
  ['Slovenia', 1952, 601, 'md'],
  ['Romania', 2139, 605, 'lg'],
  ['Croatia', 1966, 639, 'md'],
  ['Serbia', 2077, 654, 'md'],
  ['France', 1710, 581, 'lg'],
  ['Spain', 1601, 765, 'lg'],
  ['Monaco', 1812, 667, 'md'],
  ['Andorra', 1697, 699, 'md'],
  ['Gibraltar', 1564, 861, 'md'],
  ['Tunisia', 1838, 916, 'lg'],
  ['Italy', 1912, 697, 'lg'],
  ['Bulgaria', 2158, 694, 'lg'],
  ['Albania', 2057, 736, 'md'],
  ['Greece', 2091, 788, 'lg'],
  ['Türkiye', 2359, 791, 'lg'],
  ['Cyprus', 2310, 890, 'md'],
  ['Syria', 2419, 891, 'lg'],
  ['Israel', 2343, 971, 'lg'],
  ['Libya', 2007, 1080, 'lg'],
  ['Egypt', 2242, 1073, 'lg'],
  ['Niger', 1860, 1267, 'lg'],
  ['Eritrea', 2412, 1318, 'lg'],
  ['Morocco', 1482, 1028, 'lg'],
  ['Algeria', 1678, 1040, 'lg'],
  ['Mauritania', 1443, 1196, 'lg'],
  ['Mali', 1652, 1267, 'lg'],
  ['Senegal', 1381, 1332, 'lg'],
  ['United Kingdom', 1625, 345, 'lg'],
  ['London', 1665, 442, 'city'],
  ['İstanbul', 2232, 739, 'city'],
  ['Moscow', 2401, 302, 'city'],
];

const LABEL_CLASS = {
  lg: 'text-[27px] font-bold',
  md: 'text-[25px] font-bold',
  city: 'text-[24px]',
};

function MapView() {
  return (
    <main className="relative min-w-0 flex-1 overflow-hidden bg-[#94c1e1]">
      <svg
        className="absolute inset-0 h-full w-full font-['Noto_Sans',sans-serif]"
        viewBox="1262 110 1138 1240"
        preserveAspectRatio="xMidYMid slice"
        role="img"
        aria-label="Map of Europe and North Africa"
      >
        <defs>
          <clipPath id="land">
            {LAND.map((points) => (
              <polygon key={points} points={points} />
            ))}
          </clipPath>
          <filter id="soften" x="-20%" y="-20%" width="140%" height="140%">
            <feGaussianBlur stdDeviation="7" />
          </filter>
          <filter id="relief" x="0" y="0" width="100%" height="100%" colorInterpolationFilters="sRGB">
            <feTurbulence type="fractalNoise" baseFrequency="0.045 0.06" numOctaves="4" seed="4" result="noise" />
            <feColorMatrix in="noise" values="0 0 0 0 0  0 0 0 0 0  0 0 0 0 0  1 0 0 0 0" />
            <feDiffuseLighting surfaceScale="9" diffuseConstant="1.25" lightingColor="#fff">
              <feDistantLight azimuth="225" elevation="53" />
            </feDiffuseLighting>
          </filter>
          <mask id="ranges" maskUnits="userSpaceOnUse" x="1262" y="110" width="1138" height="1240">
            <rect x="1262" y="110" width="1138" height="1240" fill="#0c0c0c" />
            <g filter="url(#soften)" fill="none" stroke="#a8a8a8" strokeLinecap="round" strokeLinejoin="round">
              {RANGES.map(([d, width]) => (
                <path key={d} d={d} strokeWidth={width} />
              ))}
            </g>
          </mask>
        </defs>

        <g fill="#dfe0d0">
          {LAND.map((points) => (
            <polygon key={points} points={points} />
          ))}
        </g>
        <g clipPath="url(#land)">
          <g fill="#c6dba8" fillOpacity="0.6">
            {FOREST.map((points) => (
              <polygon key={points} points={points} />
            ))}
          </g>
          <g filter="url(#soften)" fill="none" stroke="#c3d6a6" strokeOpacity="0.5" strokeWidth="26">
            <path d="M1790 650L1800 600 1950 578M2010 510L2110 505 2165 560 2180 610 2100 622M1960 625L2050 700M1870 650L1990 770M1735 610L1745 640M1640 676L1735 696M1890 470L1960 462" />
          </g>
          <path
            fill="#e4e1d3"
            d="M1800 115l40-5 8 30-20 30-10 20-18-5 4-30zM1910 200l20-5 30 5 15-5-2 15-60 8zM1975 160l25-10 20 8-20 6zM2240 155l15-15 10 12-10 18-15 5zM2265 235l6 6-6 14-8-6zM2225 190l20-8 4 8-12 8zM2330 290l12-10 12 14-8 8zM2360 345l14-10 10 14-14 8z"
          />
          <g mask="url(#ranges)" className="mix-blend-multiply">
            <rect x="1262" y="110" width="1138" height="1240" filter="url(#relief)" />
          </g>
        </g>
        <g fill="#94c1e1">
          {WATER.map((points) => (
            <polygon key={points} points={points} />
          ))}
          <path d="M1778 150l20-28 10-6-12 18-14 22zM1875 300l8 24 14 12-18-8z" />
        </g>
        <g fill="none" stroke="#a6a6a6" strokeWidth="2" strokeLinejoin="round">
          <path d={BORDERS} />
          <path d="M1411 1047h88M2317 1168h69M2317 1168l8 5h8l4-10 8-2 4-10 8-2 5-6" strokeDasharray="9 5" />
        </g>
        <g fill="#222" stroke="#f5f7f4" strokeWidth="6" strokeLinejoin="round" textAnchor="middle" paintOrder="stroke">
          {LABELS.map(([name, x, y, kind]) => (
            <text key={name} x={x} y={y} className={LABEL_CLASS[kind]}>
              {name}
            </text>
          ))}
        </g>
      </svg>

      <div className="absolute top-9 right-9 w-[72px] overflow-hidden rounded-lg bg-[#fcfcfc]">
        <button type="button" aria-label="Reset rotation" className="flex h-[72px] w-full items-center justify-center">
          <Icon size={38} box={38} stroke={2}>
            <circle cx="19" cy="19" r="17.500" />
            <path d="M19 2v16" />
          </Icon>
        </button>
        <div className="flex h-[52px] items-center justify-center border-t-2 border-[#dedede] text-2xl font-light">2.6</div>
      </div>

      <div className="absolute right-6 bottom-[22px] flex h-[54px] items-center rounded-full bg-white pl-[18px] font-['Liberation_Sans',Arial,sans-serif] text-[27px] text-[#333]">
        <a href="#maptiler">© MapTiler</a>
        <span>&nbsp;</span>
        <a href="#osm">© OpenStreetMap contributors</a>
        <button
          type="button"
          aria-label="Toggle attribution"
          className="ml-2.5 flex h-[54px] w-[54px] items-center justify-center rounded-full bg-[#f0f0f0]"
        >
          <svg width="33" height="33" viewBox="0 0 33 33" aria-hidden="true">
            <circle cx="16.500" cy="16.500" r="16.500" />
            <circle cx="16.500" cy="8" r="2.800" fill="#fff" />
            <path d="M12.500 13h6v11h2v2.500h-8V24h2v-8.500h-2z" fill="#fff" />
          </svg>
        </button>
      </div>
    </main>
  );
}

export default function App() {
  return (
    <div className="flex h-screen flex-col overflow-hidden bg-[#fafafa] font-['Inter',sans-serif] text-[#1c1c1c]">
      <Header />
      <div className="flex min-h-0 flex-1">
        <SideRail />
        <LayersPanel />
        <StylePanel />
        <MapView />
      </div>
    </div>
  );
}
